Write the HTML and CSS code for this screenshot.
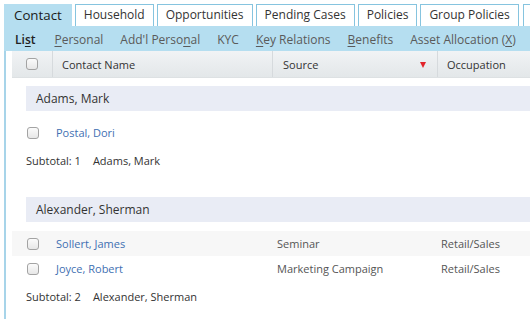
FILE: index.html
```html
<!DOCTYPE html>
<html>
<head>
<meta charset="utf-8">
<link rel="stylesheet" href="styles.css">
</head>
<body>
<div class="wrap">
  <div class="tabs">
    <div class="tab active">Contact</div>
    <div class="tab">Household</div>
    <div class="tab">Opportunities</div>
    <div class="tab">Pending Cases</div>
    <div class="tab">Policies</div>
    <div class="tab">Group Policies</div>
    <div class="tab more"></div>
  </div>
  <div class="subnav">
    <span class="sub current">Li<u>s</u>t</span>
    <span class="sub"><u>P</u>ersonal</span>
    <span class="sub">Add'l Perso<u>n</u>al</span>
    <span class="sub">KYC</span>
    <span class="sub"><u>K</u>ey Relations</span>
    <span class="sub"><u>B</u>enefits</span>
    <span class="sub">Asset Allocation (<u>X</u>)</span>
  </div>
  <div class="panel">
    <div class="grid head">
      <div class="hcell cbcell"><span class="cb"></span></div>
      <div class="hcell">Contact Name</div>
      <div class="hcell src">Source<span class="filter"></span></div>
      <div class="hcell">Occupation</div>
    </div>

    <div class="group">Adams, Mark</div>
    <div class="grid row">
      <div class="cell cbcell"><span class="cb"></span></div>
      <div class="cell"><a class="link">Postal, Dori</a></div>
      <div class="cell"></div>
      <div class="cell"></div>
    </div>
    <div class="subtotal"><span class="count">Subtotal: 1</span><span>Adams, Mark</span></div>

    <div class="group">Alexander, Sherman</div>
    <div class="grid row stripe">
      <div class="cell cbcell"><span class="cb"></span></div>
      <div class="cell"><a class="link">Sollert, James</a></div>
      <div class="cell">Seminar</div>
      <div class="cell">Retail/Sales</div>
    </div>
    <div class="grid row">
      <div class="cell cbcell"><span class="cb"></span></div>
      <div class="cell"><a class="link">Joyce, Robert</a></div>
      <div class="cell">Marketing Campaign</div>
      <div class="cell">Retail/Sales</div>
    </div>
    <div class="subtotal"><span class="count">Subtotal: 2</span><span>Alexander, Sherman</span></div>
  </div>
</div>
</body>
</html>
```

FILE: styles.css
```css
html, body {
  margin: 0;
  padding: 0;
  background: #fff;
  width: 530px;
  height: 319px;
  overflow: hidden;
  font-family: "Open Sans", "Noto Sans", sans-serif;
  color: #333;
}
.wrap {
  margin-left: 4px;
  padding-top: 4px;
  background: #fff;
}
.tabs {
  display: flex;
  gap: 3px;
  white-space: nowrap;
  overflow: hidden;
  height: 22px;
}
.tab {
  flex: none;
  box-sizing: border-box;
  height: 22px;
  line-height: 20px;
  padding: 0 8px;
  border: 1px solid #86c4df;
  border-bottom: none;
  background: #fff;
  font-size: 12px;
  color: #333;
}
.tab.active {
  background: #b5def0;
  border-color: #b5def0;
  font-size: 13.3px;
  color: #1b1b1b;
  padding: 0 9px;
}
.tab.more {
  width: 30px;
  margin-left: 1px;
}
.subnav {
  display: flex;
  align-items: center;
  gap: 17px;
  height: 25px;
  padding: 1px 0 0 11px;
  box-sizing: border-box;
  background: #b5def0;
  font-size: 12px;
  color: #5a5a5a;
  white-space: nowrap;
}
.sub.current {
  font-weight: 600;
  color: #222;
  margin-right: 2px;
}
.sub u {
  text-decoration: underline;
  text-underline-offset: 2px;
}
.panel {
  border-left: 2px solid #a7d4e9;
  padding-left: 6px;
  height: 280px;
}
.grid {
  display: grid;
  grid-template-columns: 40px 220px 165px 1fr;
}
.head {
  height: 27px;
  background: linear-gradient(#f1f3f5, #e3e7e9);
  border-bottom: 1px solid #dde1e3;
  box-sizing: border-box;
  font-size: 11px;
  color: #333;
}
.hcell {
  display: flex;
  align-items: center;
  padding-left: 9px;
  border-left: 1px solid #d6dadd;
}
.hcell:first-child {
  border-left: none;
}
.hcell.src {
  padding-left: 10px;
  position: relative;
}
.cbcell {
  justify-content: center;
  padding-left: 0;
  display: flex;
  align-items: center;
}
.cb {
  display: inline-block;
  width: 12px;
  height: 12px;
  box-sizing: border-box;
  border: 1px solid #a3a3a3;
  border-radius: 3px;
  background: linear-gradient(#fbfbfb, #e7e7e7);
}
.filter {
  position: absolute;
  right: 11px;
  top: 11px;
  width: 0;
  height: 0;
  border-left: 3.5px solid transparent;
  border-right: 3.5px solid transparent;
  border-top: 6px solid #e2242b;
}
.group {
  margin: 8px 0 9px 14px;
  height: 25px;
  line-height: 25px;
  padding-left: 10px;
  background: #e9ecf5;
  font-size: 12px;
  color: #333;
}
.row {
  height: 25px;
  font-size: 11px;
  color: #555;
}
.row.stripe {
  background: #f7f7f7;
}
.cell {
  display: flex;
  align-items: center;
  padding-left: 5px;
}
.cell:nth-child(2) {
  padding-left: 4px;
}
.cell:nth-child(4) {
  padding-left: 4px;
}
.row .cbcell {
  padding-left: 1px;
}
.link {
  color: #3f70b2;
  text-decoration: none;
}
.subtotal {
  display: flex;
  align-items: center;
  gap: 12px;
  height: 30px;
  margin-bottom: 22px;
  padding-left: 14px;
  font-size: 11px;
  color: #333;
}
```
